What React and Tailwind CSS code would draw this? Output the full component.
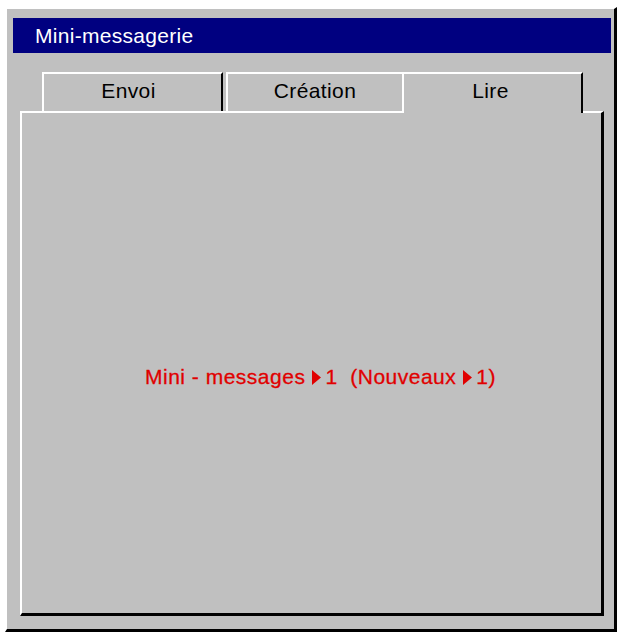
import React from 'react';

const font = { fontFamily: '"Liberation Sans", Arial, sans-serif' };

const Tri = () => (
  <svg width="10" height="15" viewBox="0 0 10 15" className="inline-block ml-[6px] mr-[4px] -mt-[3px] align-middle">
    <path d="M1 0 L10 7.5 L1 15 Z" fill="#e00000" />
  </svg>
);

export default function App() {
  return (
    <div className="w-[621px] h-[637px] bg-white pl-[5px] pt-[7px]" style={font}>
      <div className="w-[612px] h-[625px] bg-[#c0c0c0] border-t-2 border-l-2 border-white border-r-[3px] border-b-[3px] border-r-black border-b-black flex flex-col">
        {/* title bar */}
        <div className="ml-[6px] mr-[3px] mt-[9px] h-[35px] bg-[#000080] flex items-center pl-[22px] text-white text-[21px] tracking-[0.3px]">
          Mini-messagerie
        </div>

        {/* tabs */}
        <div className="flex mt-[19px] ml-[35px] h-[39px] text-[21px] tracking-[0.4px] text-black">
          <div className="w-[181px] border-t-2 border-l-2 border-white border-r-2 border-r-black flex items-center justify-center pb-[4px] pr-[8px]">
            Envoi
          </div>
          <div className="ml-[3px] w-[176px] border-t-2 border-l-2 border-white flex items-center justify-center pb-[4px]">
            Création
          </div>
          <div className="relative z-10 w-[181px] h-[41px] bg-[#c0c0c0] border-t-2 border-l-2 border-white border-r-2 border-r-black flex items-center justify-center pb-[6px] pr-[4px]">
            Lire
          </div>
        </div>

        {/* panel */}
        <div className="ml-[13px] mr-[10px] mb-[13px] flex-1 border-t-2 border-l-2 border-white border-r-[3px] border-b-[3px] border-r-black border-b-black flex items-center justify-center pl-[18px] pt-[28px]">
          <span className="whitespace-pre text-[21px] tracking-[0.5px] text-[#e00000]" style={{ WebkitTextStroke: '0.3px #e00000' }}>
            Mini - messages<Tri />1  (Nouveaux<Tri />1)
          </span>
        </div>
      </div>
    </div>
  );
}
